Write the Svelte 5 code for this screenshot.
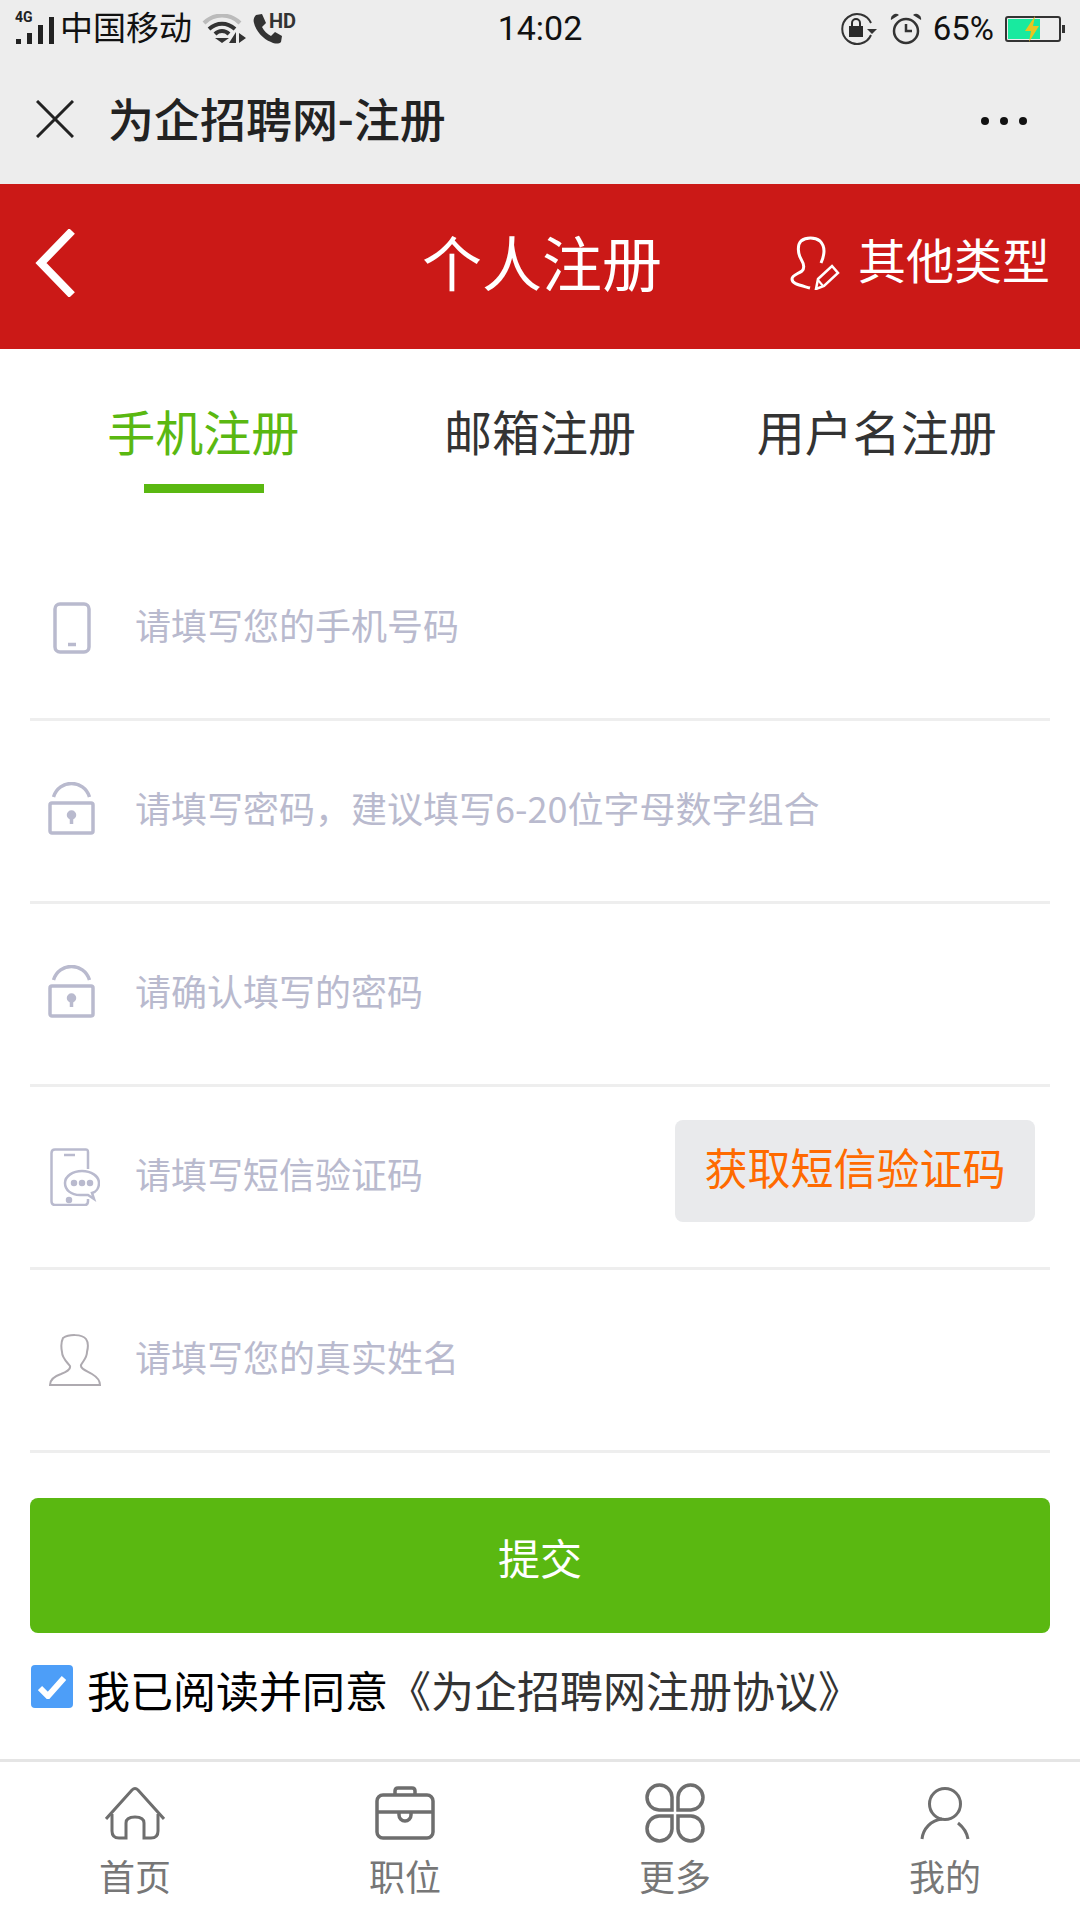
<script>
  let agreed = $state(true);

  const tabs = ["手机注册", "邮箱注册", "用户名注册"];
  const fields = [
    { icon: "phone", hint: "请填写您的手机号码" },
    { icon: "lock", hint: "请填写密码，建议填写6-20位字母数字组合" },
    { icon: "lock", hint: "请确认填写的密码" },
    { icon: "chat", hint: "请填写短信验证码", code: true },
    { icon: "person", hint: "请填写您的真实姓名" }
  ];
</script>

<div class="page">
  <div class="status">
    <div class="status-left">
      <span class="signal">
        <b>4G</b>
        <svg width="40" height="30" viewBox="0 0 40 30">
          <rect x="1" y="24" width="5" height="5" fill="#222" />
          <rect x="12" y="18" width="5" height="11" fill="#222" />
          <rect x="23" y="10" width="5" height="19" fill="#222" />
          <rect x="34" y="2" width="5" height="27" fill="#222" />
        </svg>
      </span>
      <span class="carrier">中国移动</span>
      <svg class="wifi" width="46" height="30" viewBox="0 0 46 30" fill="none">
        <path d="M2 9 C12 -1 28 -1 38 9" stroke="#bbb" stroke-width="4" />
        <path d="M7 15 C15 8 25 8 33 15" stroke="#333" stroke-width="4" />
        <path d="M13 20 C17 16 23 16 27 20" stroke="#333" stroke-width="4" />
        <path d="M13 24 L27 24 L20 29 Z" fill="#333" />
        <path d="M34 18 V29 H27 Z M37 19 L37 29 L44 24 Z" fill="#333" />
      </svg>
      <span class="call">
        <svg width="30" height="30" viewBox="0 0 30 30">
          <path d="M3 1 L9 0 L13 9 L9 13 C11 17 14 20 18 22 L22 18 L29 22 L28 28 C26 30 22 30 18 28 C10 25 3 17 1 9 C0 6 1 3 3 1 Z" fill="#333" />
        </svg>
        <b>HD</b>
      </span>
    </div>
    <span class="time">14:02</span>
    <div class="status-right">
      <svg class="rotate" width="36" height="34" viewBox="0 0 36 34" fill="none">
        <path d="M30 11 A15 15 0 1 0 30 23" stroke="#333" stroke-width="2" />
        <path d="M8 14 H22 V25 H8 Z" fill="#2b2b2b" />
        <path d="M11 14 V11 A4 4 0 0 1 19 11 V14" stroke="#2b2b2b" stroke-width="2" />
        <path d="M26 17 H36 L31 22 Z" fill="#333" />
      </svg>
      <svg width="32" height="32" viewBox="0 0 32 32" fill="none">
        <circle cx="16" cy="18" r="12" stroke="#333" stroke-width="2.5" />
        <path d="M16 11 V18 H22" stroke="#333" stroke-width="2.5" />
        <path d="M1 7 A5 5 0 0 1 9 2 Z M31 7 A5 5 0 0 0 23 2 Z" fill="#333" />
      </svg>
      <span class="percent">65%</span>
      <span class="battery">
        <span class="charge"></span>
        <svg class="bolt" width="16" height="26" viewBox="0 0 16 26">
          <path d="M11 0 L1 15 H7 L5 26 L15 10 H9 Z" fill="#e8c520" />
        </svg>
      </span>
      <span class="tip"></span>
    </div>
  </div>

  <div class="titlebar">
    <svg class="close" width="38" height="38" viewBox="0 0 38 38">
      <path d="M1 1 L37 37 M37 1 L1 37" stroke="#222" stroke-width="3" />
    </svg>
    <span class="title">为企招聘网-注册</span>
    <span class="dots"><i></i><i></i><i></i></span>
  </div>

  <header class="head">
    <svg class="back" width="42" height="68" viewBox="0 0 42 68">
      <path d="M38 2 L7 34 L38 66" fill="none" stroke="#fff" stroke-width="8" />
    </svg>
    <h1>个人注册</h1>
    <div class="other">
      <svg width="52" height="54" viewBox="0 0 52 54" fill="none" stroke="#fff" stroke-width="3">
        <path d="M32 27 C36 18 36 10 31 5 C26 1 17 1 12 5 C8 9 9 18 12 23 C15 28 16 32 13 35 C9 38 3 39 3 43 C3 48 10 49 21 52" />
        <path d="M27 53 L29 43 L43 30 L49 37 L35 50 Z" stroke-width="2.5" />
        <path d="M29 44 L34 50" stroke-width="2" />
      </svg>
      <span>其他类型</span>
    </div>
  </header>

  <nav class="tabs">
    {#each tabs as tab, i}
      <div class="tab" class:on={i === 0}>{tab}</div>
    {/each}
  </nav>

  <form class="form">
    {#each fields as field}
      <div class="row">
        <span class="icon {field.icon}">
          {#if field.icon === "phone"}
            <svg width="38" height="52" viewBox="0 0 38 52" fill="none" stroke="#b9bace" stroke-width="3.5">
              <rect x="2" y="2" width="34" height="48" rx="5" />
              <path d="M15 42.500 H23" />
            </svg>
          {:else if field.icon === "lock"}
            <svg width="47" height="53" viewBox="0 0 47 53" fill="none" stroke="#b9bace" stroke-width="3.5">
              <path d="M5.500 15 C11 -3 36 -3 41.500 15" />
              <rect x="2" y="21" width="43" height="30" rx="2" />
              <path d="M23.500 34 V42" />
              <circle cx="23.500" cy="33" r="3" fill="#b9bace" />
            </svg>
          {:else if field.icon === "chat"}
            <svg width="50" height="58" viewBox="0 0 50 58" fill="none" stroke="#b9bace" stroke-width="2.500">
              <path d="M38 21 V4 Q38 1 35 1.500 H5 Q1.500 1.500 1.500 5 V53 Q1.500 57 5 57 H35 Q38 57 38 53 V51" />
              <path d="M14 7 H25" />
              <path d="M30 47 C21 47 15 42 15 35 C15 28 23 23 32 23 C41 23 49 28 49 35 C49 40 46 44 42 45 L44 51 L38 47 Z" fill="#fff" />
              <circle cx="24" cy="35" r="2" fill="#b9bace" />
              <circle cx="32" cy="35" r="2" fill="#b9bace" />
              <circle cx="40" cy="35" r="2" fill="#b9bace" />
              <circle cx="19" cy="52" r="2" fill="#b9bace" />
            </svg>
          {:else}
            <svg width="52" height="52" viewBox="0 0 52 52" fill="none" stroke="#aeaab0" stroke-width="2">
              <path d="M14 4 C20 0 33 0 37 5 C40 9 39 14 38 18 C38 24 34 27 32 31 C31 35 38 37 43 40 C48 43 51 47 51 51 H1 C1 46 6 42 12 40 C17 38 22 36 21 32 C18 28 13 24 13 18 C12 13 12 8 14 4 Z" />
            </svg>
          {/if}
        </span>
        <input class="field" placeholder={field.hint} />
        {#if field.code}
          <button type="button" class="code">获取短信验证码</button>
        {/if}
      </div>
    {/each}

    <button type="button" class="submit">提交</button>

    <label class="agree">
      <input type="checkbox" bind:checked={agreed} />
      <span class="box">
        <svg width="28" height="24" viewBox="0 0 28 24" fill="none">
          <path d="M2 13 L10 21 L26 3" stroke="#fff" stroke-width="6" />
        </svg>
      </span>
      <span class="read">我已阅读并同意<em>《为企招聘网注册协议》</em></span>
    </label>
  </form>

  <footer class="bar">
    <div class="item">
      <svg width="60" height="54" viewBox="0 0 60 54" fill="none" stroke="#6e6e6e" stroke-width="3">
        <path d="M1 33 L27 4 Q30 1 33 4 L59 33" />
        <path d="M7 28 V45 Q7 52 14 52 H21 V37 Q21 31 30 31 Q39 31 39 37 V52 H46 Q53 52 53 45 V28" />
      </svg>
      <span>首页</span>
    </div>
    <div class="item">
      <svg width="60" height="54" viewBox="0 0 60 54" fill="none" stroke="#6e6e6e" stroke-width="3.5">
        <rect x="2" y="9" width="56" height="43" rx="6" />
        <path d="M20 9 V5 Q20 2 23 2 H37 Q40 2 40 5 V9" />
        <path d="M2 26 H58" />
        <path d="M24 26 V29 A6 6 0 0 0 36 29 V26" />
      </svg>
      <span>职位</span>
    </div>
    <div class="item">
      <svg width="60" height="60" viewBox="0 0 60 60" fill="none" stroke="#6e6e6e" stroke-width="3.5">
        <path d="M27 27 H14 A12.500 12.500 0 1 1 27 14 Z" />
        <path d="M33 27 H46 A12.500 12.500 0 1 0 33 14 Z" />
        <path d="M27 33 H14 A12.500 12.500 0 1 0 27 46 Z" />
        <path d="M33 33 H46 A12.500 12.500 0 1 1 33 46 Z" />
      </svg>
      <span>更多</span>
    </div>
    <div class="item">
      <svg width="50" height="54" viewBox="0 0 50 54" fill="none" stroke="#6e6e6e" stroke-width="3">
        <circle cx="25" cy="18" r="15.500" />
        <path d="M2 53 C3 43 11 34 22 33" />
        <path d="M38 37 C43 41 47 47 48 53" />
      </svg>
      <span>我的</span>
    </div>
  </footer>
</div>

<style>
  :global(body) {
    background: #fff;
  }

  .page {
    display: flex;
    flex-direction: column;
    width: 1080px;
    height: 1920px;
    overflow: hidden;
    font-family: Roboto, "Noto Sans CJK SC", sans-serif;
  }

  /* status bar */
  .status {
    display: grid;
    grid-template-columns: 1fr auto 1fr;
    align-items: center;
    height: 57px;
    padding: 0 15px;
    box-sizing: border-box;
    background: #ededed;
    color: #111;
  }

  .status-left,
  .status-right {
    display: flex;
    align-items: center;
  }

  .status-right {
    justify-content: flex-end;
    gap: 9px;
  }

  .rotate {
    margin-right: 4px;
  }

  .signal {
    position: relative;
    display: flex;
    padding-top: 2px;
    height: 30px;
  }

  .signal b {
    position: absolute;
    left: 0;
    top: -3px;
    font-size: 14px;
    line-height: 14px;
    color: #222;
  }

  .carrier {
    margin-left: 5px;
    font-size: 33px;
    line-height: 40px;
  }

  .wifi {
    margin-left: 10px;
  }

  .call {
    position: relative;
    display: flex;
    width: 40px;
    margin-left: 5px;
  }

  .call b {
    position: absolute;
    left: 16px;
    top: -3px;
    font-size: 20px;
    line-height: 20px;
    color: #333;
  }

  .time {
    margin-top: -2px;
    font-size: 34px;
    line-height: 40px;
  }

  .percent {
    margin-left: 2px;
    font-size: 33px;
    line-height: 40px;
  }

  .battery {
    position: relative;
    width: 56px;
    height: 26px;
    margin-left: 2px;
    box-sizing: border-box;
    border: 2px solid #333;
    border-radius: 3px;
  }

  .charge {
    position: absolute;
    left: 1px;
    top: 1px;
    bottom: 1px;
    width: 32px;
    background: #18ea9f;
  }

  .bolt {
    position: absolute;
    left: 17px;
    top: -2px;
  }

  .tip {
    width: 3px;
    height: 8px;
    margin-left: -8px;
    background: #333;
  }

  /* wechat title bar */
  .titlebar {
    display: flex;
    align-items: center;
    height: 127px;
    padding: 0 53px 0 36px;
    background: #ededed;
  }

  .close {
    margin-bottom: 3px;
  }

  .title {
    margin: 0 0 8px 34px;
    font-size: 46px;
    font-weight: 500;
    color: #222;
  }

  .dots {
    display: flex;
    gap: 11px;
    margin-left: auto;
  }

  .dots i {
    width: 8px;
    height: 8px;
    border-radius: 50%;
    background: #111;
  }

  /* red header */
  .head {
    display: grid;
    grid-template-columns: 1fr auto 1fr;
    align-items: center;
    height: 165px;
    padding: 0 30px 0 34px;
    background: #cb1917;
    color: #fff;
  }

  .back {
    margin-top: -8px;
  }

  .head h1 {
    margin: 0;
    font-size: 60px;
    font-weight: 400;
    line-height: 80px;
  }

  .other {
    display: flex;
    align-items: center;
    justify-content: flex-end;
    gap: 17px;
    font-size: 48px;
    line-height: 60px;
    margin-top: -8px;
  }

  /* tabs */
  .tabs {
    display: flex;
    padding: 0 35px;
    height: 144px;
  }

  .tab {
    position: relative;
    flex: 1;
    padding-top: 53px;
    text-align: center;
    font-size: 48px;
    line-height: 66px;
    color: #333;
  }

  .tab.on {
    color: #5ab811;
  }

  .tab.on::after {
    content: "";
    position: absolute;
    left: 50%;
    bottom: 0;
    width: 120px;
    height: 9px;
    margin-left: -59px;
    background: #5ab811;
  }

  /* form */
  .form {
    display: flex;
    flex-direction: column;
    flex: 1;
    padding: 45px 30px 0;
  }

  .row {
    display: flex;
    align-items: center;
    height: 183px;
    box-sizing: border-box;
    border-bottom: 3px solid #eee;
    padding-right: 15px;
  }

  .icon {
    display: flex;
    width: 86px;
    margin-right: 19px;
    padding-left: 19px;
    box-sizing: border-box;
  }

  .icon.phone {
    padding-left: 23px;
  }

  .icon.lock {
    margin-top: -6px;
    padding-left: 18px;
  }

  .icon.chat {
    padding-left: 20px;
  }

  .field {
    flex: 1;
    min-width: 0;
    padding: 0 0 8px;
    border: 0;
    outline: 0;
    background: none;
    font: 36px/50px "Noto Sans CJK SC", sans-serif;
  }

  .field::placeholder {
    color: #b9bace;
    opacity: 1;
  }

  .code {
    width: 360px;
    height: 102px;
    margin-bottom: 12px;
    padding: 0 0 10px;
    border: 0;
    border-radius: 8px;
    background: #e9eaec;
    color: #ff6a00;
    font: 43px/60px "Noto Sans CJK SC", sans-serif;
  }

  .submit {
    height: 135px;
    margin-top: 45px;
    padding: 0 0 17px;
    border: 0;
    border-radius: 8px;
    background: #5ab811;
    color: #fff;
    font: 42px/60px "Noto Sans CJK SC", sans-serif;
  }

  .agree {
    position: relative;
    display: flex;
    align-items: flex-start;
    margin-top: 32px;
    padding-left: 1px;
  }

  .agree input {
    position: absolute;
    opacity: 0;
  }

  .box {
    display: flex;
    align-items: center;
    justify-content: center;
    width: 42px;
    height: 43px;
    border-radius: 4px;
    background: #4d9ef8;
  }

  .read {
    margin-left: 14px;
    margin-top: -2px;
    font-size: 43px;
    line-height: 60px;
    color: #000;
    white-space: nowrap;
  }

  .read em {
    font-style: normal;
    color: #333;
  }

  /* bottom nav */
  .bar {
    display: grid;
    grid-template-columns: repeat(4, 1fr);
    height: 161px;
    box-sizing: border-box;
    border-top: 3px solid #e5e5e5;
  }

  .item {
    display: flex;
    flex-direction: column;
    align-items: center;
    height: 158px;
    padding-top: 21px;
    box-sizing: border-box;
    font-size: 36px;
    line-height: 44px;
    color: #777;
  }

  .item svg {
    height: 60px;
    margin-bottom: 14px;
  }
</style>
